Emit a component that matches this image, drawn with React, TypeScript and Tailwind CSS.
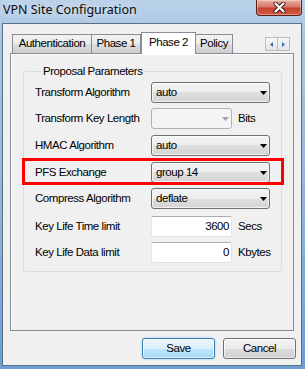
const Arrow = ({ color = "#000000" }: { color?: string }) => (
  <svg width="7" height="4" viewBox="0 0 7 4" className="shrink-0">
    <path d="M0 0h7L3.5 4z" fill={color} />
  </svg>
);

const Select = ({ value }: { value: string }) => (
  <div className="w-[119px] h-[21px] flex items-center pl-[4px] pr-[2px] rounded-[3px] border border-[#707070] bg-[linear-gradient(180deg,#f4f4f4_0%,#ececec_50%,#dfdfdf_50%,#d3d3d3_100%)] shadow-[inset_0_0_0_1px_rgba(255,255,255,0.7)]">
    <span className="flex-1">{value}</span>
    <Arrow />
  </div>
);

const Row = ({ label, children, className = "" }: { label: string; children: React.ReactNode; className?: string }) => (
  <div className={`flex items-center h-[21px] ${className}`}>
    <div className="w-[116px] shrink-0">{label}</div>
    {children}
  </div>
);

const NumberBox = ({ value }: { value: string }) => (
  <div className="w-[81px] h-[21px] flex items-center justify-end pr-[2px] bg-white border border-[#e2e3ea] border-t-[#abadb3] rounded-[2px]">
    {value}
  </div>
);

export default function App() {
  return (
    <div className="w-[305px] h-[369px] flex flex-col overflow-hidden bg-[linear-gradient(180deg,#bad1e9_0%,#a9c5e2_10%,#8fb5dc_55%,#6c9ed2_100%)] font-['Liberation_Sans',Arial,sans-serif] text-[11.5px] tracking-[-0.45px] text-black">
      {/* Title bar */}
      <div className="h-[23px] flex items-start justify-between shrink-0">
        <div className="pl-[3px] pt-[1px] font-['Noto_Sans',sans-serif] text-[12.5px] leading-[18px] tracking-normal text-[#0c0c0c] [text-shadow:0_0_8px_rgba(255,255,255,0.95)]">
          VPN Site Configuration
        </div>
        <div className="w-[46px] h-[16px] mr-[3px] flex items-center justify-center rounded-b-[4px] border border-t-0 border-[#5a1f15] bg-[linear-gradient(180deg,#eab0a3_0%,#d67866_45%,#c4442f_55%,#d05a42_100%)] shadow-[inset_0_0_0_1px_rgba(255,255,255,0.35)]">
          <svg width="13" height="11" viewBox="0 0 13 11">
            <path d="M2.5 1.5L10.5 9.5M10.5 1.5L2.5 9.5" stroke="#3e1510" strokeWidth="4" strokeLinecap="round" />
            <path d="M2.5 1.5L10.5 9.5M10.5 1.5L2.5 9.5" stroke="#ffffff" strokeWidth="2.2" strokeLinecap="round" />
          </svg>
        </div>
      </div>

      {/* Client area */}
      <div className="flex-1 ml-[2px] mr-[3px] mb-[3px] border border-[#5b6f85] bg-[#f0f0f0] flex flex-col pt-[8px] px-[7px] pb-[6px]">
        {/* Tabs */}
        <div className="h-[21px] flex items-end pl-[2px] pr-[4px]">
          <div className="w-[80px] h-[19px] flex items-center justify-center border border-b-0 border-[#898c95] bg-[linear-gradient(180deg,#f2f2f2_0%,#ebebeb_50%,#dddddd_50%,#cfcfcf_100%)]">
            Authentication
          </div>
          <div className="w-[50px] h-[19px] -ml-px flex items-center justify-center border border-b-0 border-[#898c95] bg-[linear-gradient(180deg,#f2f2f2_0%,#ebebeb_50%,#dddddd_50%,#cfcfcf_100%)]">
            Phase 1
          </div>
          <div className="relative z-10 w-[55px] h-[22px] -mb-px flex items-center justify-center pb-[1px] border border-b-0 border-[#898c95] bg-white">
            Phase 2
          </div>
          <div className="w-[38px] h-[19px] -ml-px flex items-center justify-center border border-b-0 border-[#898c95] bg-[linear-gradient(180deg,#f2f2f2_0%,#ebebeb_50%,#dddddd_50%,#cfcfcf_100%)]">
            Policy
          </div>
          <div className="flex-1" />
          <div className="flex mb-[2px]">
            <div className="w-[13px] h-[14px] flex items-center justify-center border border-[#b9bdc2] bg-[linear-gradient(180deg,#f7f7f7,#e4e4e4)]">
              <svg width="3" height="5" viewBox="0 0 3 5">
                <path d="M3 0v5L0 2.5z" fill="#3b6bb4" />
              </svg>
            </div>
            <div className="w-[13px] h-[14px] -ml-px flex items-center justify-center border border-[#b9bdc2] bg-[linear-gradient(180deg,#f7f7f7,#e4e4e4)]">
              <svg width="3" height="5" viewBox="0 0 3 5">
                <path d="M0 0v5L3 2.5z" fill="#3b6bb4" />
              </svg>
            </div>
          </div>
        </div>

        {/* Tab panel */}
        <div className="h-[278px] border border-[#898c95] bg-[#f0f0f0] shadow-[inset_1px_1px_0_#ffffff] pt-[11px] pl-[12px] pr-[11px]">
          <fieldset className="border border-[#d5dfe5] rounded-[3px] pl-[11px] pt-[4px] pb-[8px]">
            <legend className="ml-[6px] px-[2px] leading-[13px]">Proposal Parameters</legend>
            <Row label="Transform Algorithm">
              <Select value="auto" />
            </Row>
            <Row label="Transform Key Length" className="mt-[5px]">
              <div className="w-[81px] h-[21px] flex items-center justify-end pr-[2px] rounded-[3px] border border-[#adb2b5] bg-[#f4f4f4]">
                <Arrow color="#a3a3a3" />
              </div>
              <span className="ml-[6px]">Bits</span>
            </Row>
            <Row label="HMAC Algorithm" className="mt-[6px]">
              <Select value="auto" />
            </Row>
            <Row label="PFS Exchange" className="relative mt-[6px]">
              <Select value="group 14" />
              <div className="absolute left-[-13px] top-[-4px] w-[262px] h-[27px] border-[3px] border-[#ff0000]" />
            </Row>
            <Row label="Compress Algorithm" className="mt-[5px]">
              <Select value="deflate" />
            </Row>
            <Row label="Key Life Time limit" className="mt-[7px]">
              <NumberBox value="3600" />
              <span className="ml-[6px]">Secs</span>
            </Row>
            <Row label="Key Life Data limit" className="mt-[5px]">
              <NumberBox value="0" />
              <span className="ml-[6px]">Kbytes</span>
            </Row>
          </fieldset>
        </div>

        {/* Buttons */}
        <div className="mt-[7px] flex justify-end gap-[8px]">
          <button className="w-[73px] h-[21px] rounded-[3px] border border-[#3c7fb1] bg-[linear-gradient(180deg,#eaf6fd_0%,#d9f0fc_50%,#bee6fd_50%,#a7d9f5_100%)] shadow-[inset_0_0_0_1px_rgba(255,255,255,0.6),0_0_2px_#7ec4ee]">
            Save
          </button>
          <button className="w-[73px] h-[21px] mr-[-2px] rounded-[3px] border border-[#707070] bg-[linear-gradient(180deg,#f2f2f2_0%,#ebebeb_50%,#dddddd_50%,#cfcfcf_100%)] shadow-[inset_0_0_0_1px_rgba(255,255,255,0.6)]">
            Cancel
          </button>
        </div>
      </div>
    </div>
  );
}
